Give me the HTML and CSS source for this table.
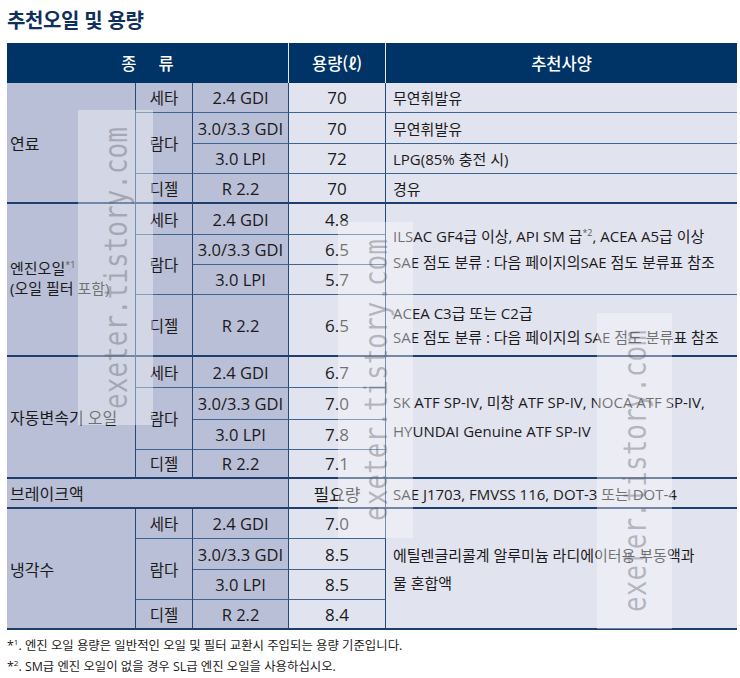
FILE: index.html
```html
<!DOCTYPE html>
<html lang="ko">
<head>
<meta charset="utf-8">
<title>추천오일 및 용량</title>
<link rel="stylesheet" href="styles.css">
</head>
<body>
<div class="page">
  <h1 class="title">추천오일 및 용량</h1>
  <div class="spec">
    <div class="th th-kind"><span>종</span><span>류</span></div>
    <div class="th th-cap">용량(ℓ)</div>
    <div class="th th-rec">추천사양</div>

    <div class="c dk k s4 end">연료</div>
    <div class="c dk e">세타</div>
    <div class="c dk v">2.4 GDI</div>
    <div class="c lt q">70</div>
    <div class="c lt r">무연휘발유</div>
    <div class="c dk e s2">람다</div>
    <div class="c dk v">3.0/3.3 GDI</div>
    <div class="c lt q">70</div>
    <div class="c lt r">무연휘발유</div>
    <div class="c dk v">3.0 LPI</div>
    <div class="c lt q">72</div>
    <div class="c lt r">LPG(85% 충전 시)</div>
    <div class="c dk e end">디젤</div>
    <div class="c dk v end">R 2.2</div>
    <div class="c lt q end">70</div>
    <div class="c lt r end">경유</div>

    <div class="c dk k s4 end kt"><p class="ln l20">엔진오일<sup class="mk">*1</sup><br>(오일 필터 포함)</p></div>
    <div class="c dk e">세타</div>
    <div class="c dk v">2.4 GDI</div>
    <div class="c lt q">4.8</div>
    <div class="c lt r s3"><p class="ln l26">ILSAC GF4급 이상, API SM 급<sup class="mk">*2</sup>, ACEA A5급 이상<br>SAE 점도 분류 : 다음 페이지의SAE 점도 분류표 참조</p></div>
    <div class="c dk e s2">람다</div>
    <div class="c dk v">3.0/3.3 GDI</div>
    <div class="c lt q">6.5</div>
    <div class="c dk v">3.0 LPI</div>
    <div class="c lt q">5.7</div>
    <div class="c dk e end">디젤</div>
    <div class="c dk v end">R 2.2</div>
    <div class="c lt q end">6.5</div>
    <div class="c lt r end"><p class="ln l24">ACEA C3급 또는 C2급<br>SAE 점도 분류 : 다음 페이지의 SAE 점도 분류표 참조</p></div>

    <div class="c dk k s4 end">자동변속기 오일</div>
    <div class="c dk e">세타</div>
    <div class="c dk v">2.4 GDI</div>
    <div class="c lt q">6.7</div>
    <div class="c lt r s4 end"><p class="ln l29">SK ATF SP-IV, 미창 ATF SP-IV, NOCA ATF SP-IV,<br>HYUNDAI Genuine ATF SP-IV</p></div>
    <div class="c dk e s2">람다</div>
    <div class="c dk v">3.0/3.3 GDI</div>
    <div class="c lt q">7.0</div>
    <div class="c dk v">3.0 LPI</div>
    <div class="c lt q">7.8</div>
    <div class="c dk e end">디젤</div>
    <div class="c dk v end">R 2.2</div>
    <div class="c lt q end">7.1</div>

    <div class="c dk k k3 end">브레이크액</div>
    <div class="c lt q end">필요량</div>
    <div class="c lt r end">SAE J1703, FMVSS 116, DOT-3 또는 DOT-4</div>

    <div class="c dk k s4 end">냉각수</div>
    <div class="c dk e">세타</div>
    <div class="c dk v">2.4 GDI</div>
    <div class="c lt q">7.0</div>
    <div class="c lt r s4 end"><p class="ln l28">에틸렌글리콜계 알루미늄 라디에이터용 부동액과<br>물 혼합액</p></div>
    <div class="c dk e s2">람다</div>
    <div class="c dk v">3.0/3.3 GDI</div>
    <div class="c lt q">8.5</div>
    <div class="c dk v">3.0 LPI</div>
    <div class="c lt q">8.5</div>
    <div class="c dk e end">디젤</div>
    <div class="c dk v end">R 2.2</div>
    <div class="c lt q end">8.4</div>
  </div>
  <div class="notes">
    <p>*<sup>1</sup>. 엔진 오일 용량은 일반적인 오일 및 필터 교환시 주입되는 용량 기준입니다.</p>
    <p>*<sup>2</sup>. SM급 엔진 오일이 없을 경우 SL급 엔진 오일을 사용하십시오.</p>
  </div>

  <div class="wm wm1"><span>exeter.tistory.com</span></div>
  <div class="wm wm2"><span>exeter.tistory.com</span></div>
  <div class="wm wm3"><span>exeter.tistory.com</span></div>
</div>
</body>
</html>
```

FILE: styles.css
```css
body {
  margin: 0;
  background: #ffffff;
  font-family: "Open Sans", "Noto Sans CJK KR", sans-serif;
  color: #1c1a1b;
}

.page {
  position: relative;
  padding: 0 3px 0 7px;
}

.title {
  margin: 7px 0 10px;
  font-family: "Noto Sans CJK KR", sans-serif;
  font-size: 20px;
  line-height: 26px;
  font-weight: 700;
  letter-spacing: -0.4px;
  color: #0f2f5c;
}

.spec {
  display: grid;
  grid-template-columns: 129px 57px 96px 97px 351px;
  grid-template-rows:
    40px
    30px 31px 30px 30px
    31px 30px 30px 62px
    31px 32px 30px 29px
    30px
    30px 31px 30px 30px;
}

.th {
  background: #003366;
  color: #ffffff;
  font-family: "Noto Sans CJK KR", sans-serif;
  font-size: 16.5px;
  font-weight: 500;
  display: flex;
  align-items: center;
  justify-content: center;
  box-sizing: border-box;
}

.th-kind {
  grid-column: span 3;
  gap: 22px;
  border-right: 1px solid #e3e7f0;
}

.th-cap {
  border-right: 1px solid #e3e7f0;
}

.c {
  display: flex;
  align-items: center;
  box-sizing: border-box;
  border-right: 1px solid #24497a;
  border-bottom: 1px solid #3d6594;
  white-space: nowrap;
}

.dk { background: #b9bfd6; }
.lt { background: #e1e3ee; }

.k {
  padding-left: 3px;
  font-size: 16px;
}

.kt { padding-bottom: 3px; }

.e {
  justify-content: center;
  font-size: 15.5px;
}

.v {
  justify-content: center;
  font-size: 16.5px;
}

.q {
  justify-content: center;
  font-size: 17px;
}

.r {
  padding-left: 7px;
  font-size: 15px;
  border-right: none;
}

.end { border-bottom: 2px solid #1d3f6e; }

.s2 { grid-row: span 2; }
.s3 { grid-row: span 3; }
.s4 { grid-row: span 4; }
.k3 { grid-column: span 3; }

.ln { margin: 0; }
.l20 { line-height: 20.5px; font-size: 15px; }
.l24 { line-height: 24px; }
.l26 { line-height: 26px; }
.l28 { line-height: 28px; }
.l29 { line-height: 29px; }

.mk {
  font-size: 9px;
  line-height: 0;
  color: #5a5a5a;
}

.notes {
  margin-top: 5px;
  font-size: 12.4px;
  line-height: 21px;
}

.notes p { margin: 0; }

.notes sup {
  font-size: 8px;
  line-height: 0;
}

.wm {
  position: absolute;
  width: 75px;
  height: 316px;
  background: rgba(255, 255, 255, 0.38);
}

.wm span {
  position: absolute;
  left: 50%;
  top: 50%;
  transform: translate(-50%, -50%) rotate(-90deg) scaleY(1.25);
  font-family: "DejaVu Sans Mono", monospace;
  font-size: 26px;
  line-height: 1;
  color: rgba(90, 90, 100, 0.38);
  white-space: nowrap;
}

.wm1 { left: 78px; top: 103px; height: 315px; }
.wm2 { left: 338px; top: 215px; }
.wm3 { left: 597px; top: 306px; }
```
